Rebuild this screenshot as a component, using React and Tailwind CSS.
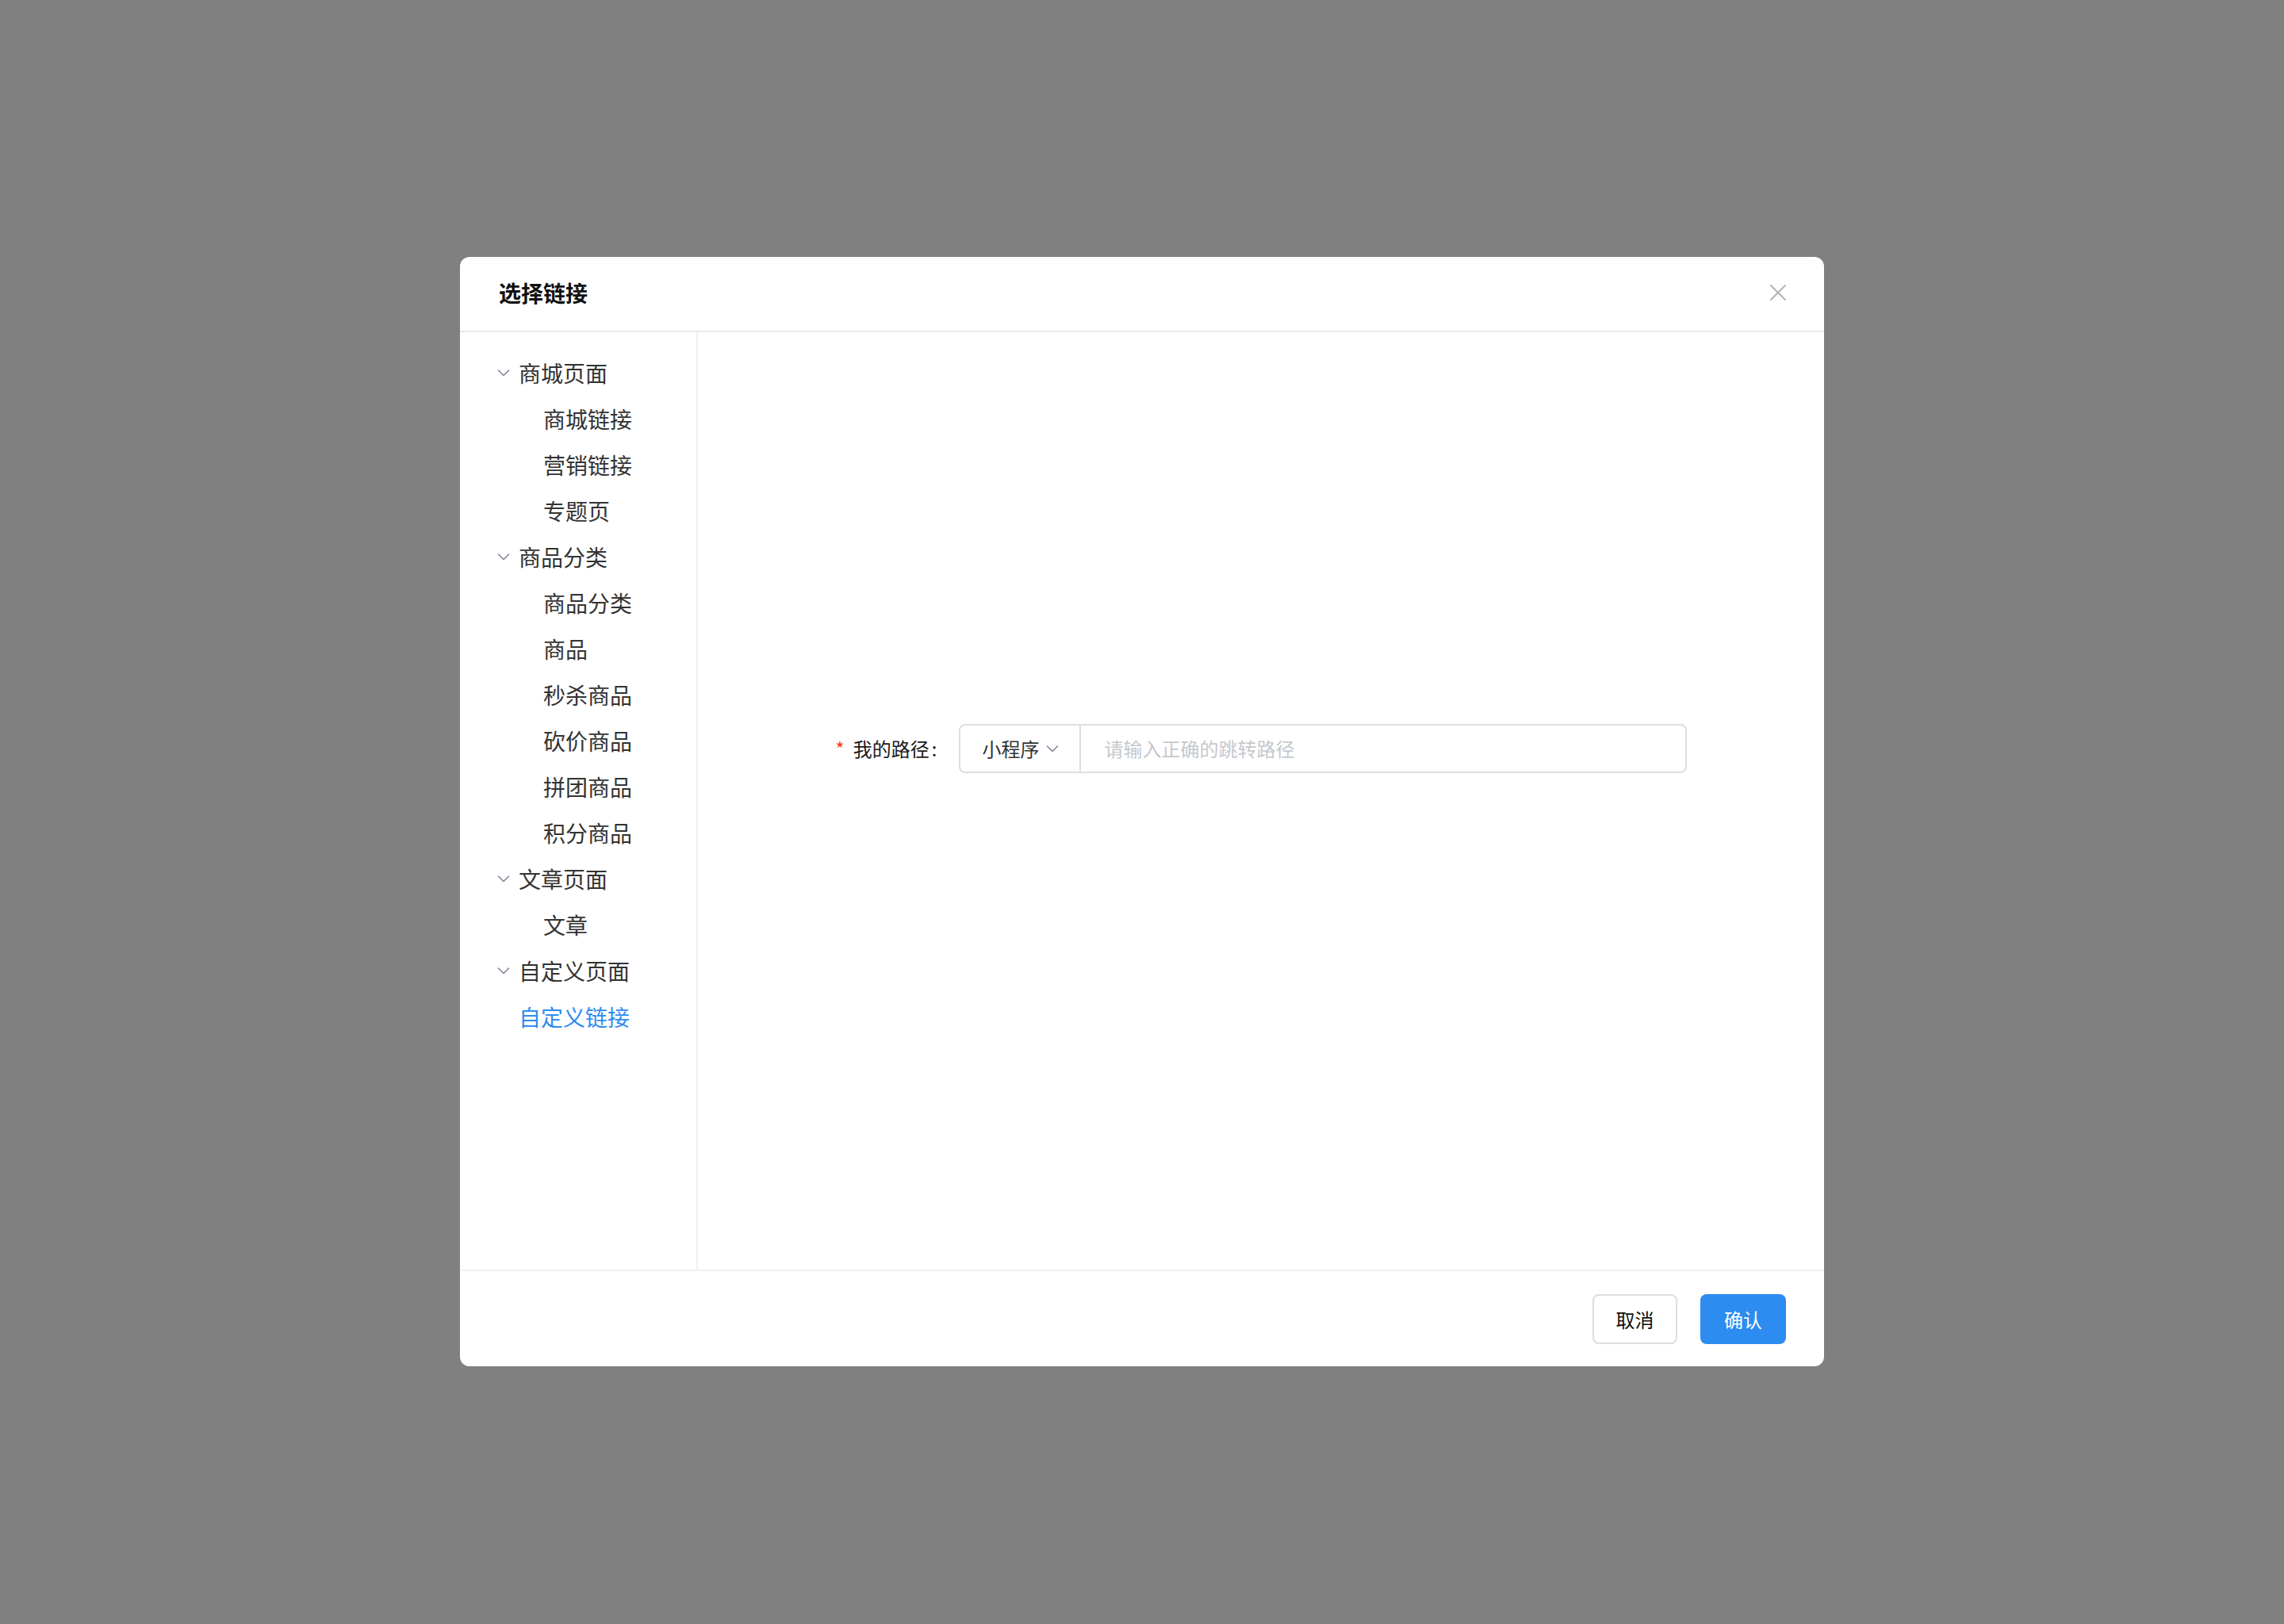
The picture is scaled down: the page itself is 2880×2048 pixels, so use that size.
import React from "react";

const tree = [
  { title: "商城页面", children: ["商城链接", "营销链接", "专题页"] },
  {
    title: "商品分类",
    children: ["商品分类", "商品", "秒杀商品", "砍价商品", "拼团商品", "积分商品"],
  },
  { title: "文章页面", children: ["文章"] },
  { title: "自定义页面", children: ["自定义链接"] },
];

const selected = "自定义链接";

function Chevron({ className }) {
  return (
    <svg width="16" height="9" viewBox="0 0 16 9" className={className}>
      <polyline
        points="1.5,1 8,7.5 14.5,1"
        fill="none"
        stroke="#808695"
        strokeWidth="1.6"
        strokeLinecap="round"
        strokeLinejoin="round"
      />
    </svg>
  );
}

function Sidebar() {
  return (
    <div className="w-[300px] shrink-0 border-r-2 border-[#f0f0f0] pt-[22px] pl-[47px]">
      {tree.map((node) => (
        <div key={node.title}>
          <div className="h-[58px] flex items-center text-[28px] leading-none text-[#333]">
            <Chevron className="mr-[11px]" />
            <span>{node.title}</span>
          </div>
          {node.children.map((c) =>
            c === selected ? (
              <div
                key={c}
                className="h-[58px] flex items-center pl-[27px] text-[28px] leading-none text-[#2d8cf0]"
              >
                {c}
              </div>
            ) : (
              <div
                key={c}
                className="h-[58px] flex items-center pl-[58px] text-[28px] leading-none text-[#333]"
              >
                {c}
              </div>
            )
          )}
        </div>
      ))}
    </div>
  );
}

function PathForm() {
  return (
    <div className="flex-1 flex justify-center pt-[494px]">
      <div className="flex items-center h-[62px]">
        <div className="w-[155px] flex items-center text-[24px] leading-none">
          <span className="text-[#ed4014] mr-[11px]">*</span>
          <span className="text-[#1a1a1a]">
            我的路径<span className="ml-[3px]">:</span>
          </span>
        </div>
        <div className="w-[918px] h-[62px] flex border-2 border-[#dcdee2] rounded-[8px]">
          <div className="w-[152px] shrink-0 flex items-center pl-[28px] border-r-2 border-[#dcdee2] text-[24px] text-[#333]">
            <span>小程序</span>
            <Chevron className="ml-[8px]" />
          </div>
          <input
            className="flex-1 pl-[30px] text-[24px] outline-none bg-transparent placeholder:text-[#c5c8ce]"
            placeholder="请输入正确的跳转路径"
          />
        </div>
      </div>
    </div>
  );
}

export default function App() {
  return (
    <div className="min-h-[2048px] bg-[#808080] pt-[324px] font-['Noto_Sans_CJK_SC','Noto_Sans',sans-serif]">
      <div className="mx-auto w-[1720px] bg-white rounded-[12px] overflow-hidden">
        <div className="h-[95px] border-b-2 border-[#e8eaec] flex items-center justify-between pl-[49px] pr-[48px] pb-[3px]">
          <h1 className="text-[28px] font-bold text-[#111] leading-none">选择链接</h1>
          <svg width="20" height="20" viewBox="0 0 20 20">
            <path d="M1 1L19 19M19 1L1 19" stroke="#b3b3b3" strokeWidth="2" strokeLinecap="round" />
          </svg>
        </div>
        <div className="h-[1182px] flex">
          <Sidebar />
          <PathForm />
        </div>
        <div className="h-[122px] border-t-2 border-[#f0f0f0] flex justify-end items-start gap-[29px] pt-[29px] pr-[48px]">
          <button className="w-[107px] h-[63px] rounded-[8px] border-2 border-[#dcdee2] text-[24px] text-[#111]">
            取消
          </button>
          <button className="w-[108px] h-[63px] rounded-[8px] bg-[#2d8cf0] text-[24px] text-white">
            确认
          </button>
        </div>
      </div>
    </div>
  );
}
